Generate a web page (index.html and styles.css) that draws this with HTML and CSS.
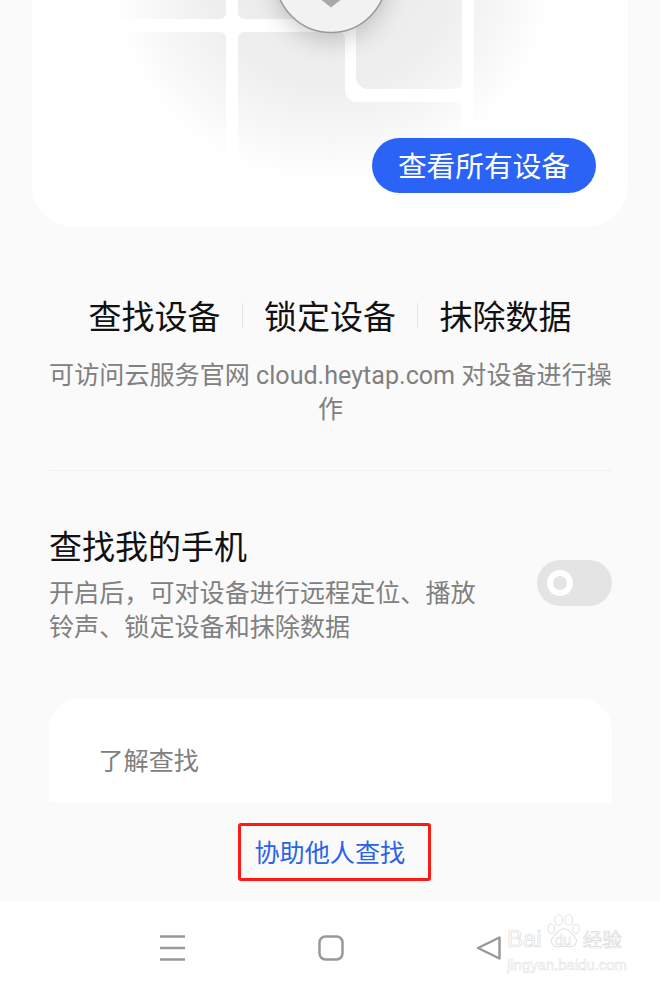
FILE: index.html
```html
<!DOCTYPE html>
<html lang="zh-CN">
<head>
    <meta charset="UTF-8">
    <meta name="viewport" content="width=device-width, initial-scale=1.0">
    <title>查找我的手机</title>
    <link rel="stylesheet" href="styles.css">
</head>
<body>
    <div class="page">
        <div class="map-card">
            <svg class="map" width="596" height="227" viewBox="32 0 596 227">
                <defs>
                    <radialGradient id="fade" gradientUnits="userSpaceOnUse" cx="331" cy="-40" r="225">
                        <stop offset="0" stop-color="#fff"></stop>
                        <stop offset="0.55" stop-color="#fff" stop-opacity="0.85"></stop>
                        <stop offset="0.8" stop-color="#fff" stop-opacity="0.4"></stop>
                        <stop offset="1" stop-color="#fff" stop-opacity="0"></stop>
                    </radialGradient>
                    <mask id="fadeMask">
                        <rect x="32" y="0" width="596" height="227" fill="url(#fade)"></rect>
                    </mask>
                    <filter id="pinShadow" x="-40%" y="-40%" width="180%" height="180%">
                        <feGaussianBlur stdDeviation="12"></feGaussianBlur>
                    </filter>
                </defs>
                <g mask="url(#fadeMask)" fill="#ebebeb">
                    <rect x="120" y="-20" width="106" height="39" rx="6"></rect>
                    <rect x="238" y="-20" width="106" height="39" rx="6"></rect>
                    <rect x="120" y="32" width="106" height="160" rx="6"></rect>
                    <path d="M244 32H339a6 6 0 0 1 6 6V90a12 12 0 0 0 12 12H455a6 6 0 0 1 6 6V200H238V38a6 6 0 0 1 6-6Z"></path>
                    <path d="M356 -20H462V83a6 6 0 0 1-6 6H368a12 12 0 0 1-12-12Z"></path>
                    <rect x="474" y="-20" width="70" height="220" rx="6"></rect>
                </g>
                <circle cx="331" cy="-16" r="56" fill="#000" opacity="0.2" filter="url(#pinShadow)"></circle>
                <circle cx="331" cy="-23" r="55.5" fill="#f2f2f2" stroke="#999" stroke-width="1.5"></circle>
                <path d="M321.5 0H340.5L331 7.5Z" fill="#a8a8a8"></path>
            </svg>
            <a class="all-devices">查看所有设备</a>
        </div>

        <div class="actions">
            <span>查找设备</span>
            <i class="sep"></i>
            <span>锁定设备</span>
            <i class="sep"></i>
            <span>抹除数据</span>
        </div>
        <p class="note">可访问云服务官网 cloud.heytap.com 对设备进行操作</p>

        <div class="find-row">
            <div class="find-text">
                <h2>查找我的手机</h2>
                <p>开启后，可对设备进行远程定位、播放铃声、锁定设备和抹除数据</p>
            </div>
            <div class="toggle"><i class="knob"></i></div>
        </div>

        <div class="learn-card">了解查找</div>

        <div class="help-bar">
            <a class="help-link">协助他人查找</a>
        </div>

        <div class="nav-bar">
            <svg class="nav-icon nav-menu" width="26" height="26" viewBox="0 0 26 26">
                <path d="M0 1.5H25M0 13H25M0 24.5H25" fill="none" stroke="#999" stroke-width="2.5"></path>
            </svg>
            <svg class="nav-icon nav-home" width="26" height="26" viewBox="0 0 26 26">
                <rect x="1.5" y="1.5" width="23" height="23" rx="6" fill="none" stroke="#999" stroke-width="2.5"></rect>
            </svg>
            <svg class="nav-icon nav-back" width="26" height="26" viewBox="0 0 26 26">
                <path d="M23.5 2.5V23.5L2 13Z" fill="none" stroke="#999" stroke-width="2.5" stroke-linejoin="round"></path>
            </svg>
            <div class="watermark">
                <div class="wm-top">
                    <span class="wm-bai">Bai</span>
                    <span class="wm-paw">
                        <svg width="34" height="36" viewBox="0 0 50 54" fill="#fff" stroke="#e2e2e2" stroke-width="1.6">
                            <ellipse cx="17" cy="9" rx="6" ry="8"></ellipse>
                            <ellipse cx="32" cy="9" rx="6" ry="8"></ellipse>
                            <ellipse cx="6" cy="22" rx="5" ry="7"></ellipse>
                            <ellipse cx="43" cy="22" rx="5" ry="7"></ellipse>
                            <path d="M25 22C33 22 35 29 41 34C47 40 42 50 33 49C28 48 22 48 17 49C7 50 3 40 9 34C15 29 17 22 25 22Z"></path>
                        </svg>
                        <span class="wm-du">du</span>
                    </span>
                    <span class="wm-cn">经验</span>
                </div>
                <div class="wm-url">jingyan.baidu.com</div>
            </div>
        </div>
    </div>
</body>
</html>
```

FILE: styles.css
```css
* {
    box-sizing: border-box;
}
html, body {
    margin: 0;
    padding: 0;
}
body {
    width: 660px;
    height: 985px;
    overflow: hidden;
    background-color: #fafafa;
    font-family: Roboto, "Noto Sans CJK SC", sans-serif;
}
.page {
    display: flex;
    flex-direction: column;
    height: 985px;
}
p, h2 {
    margin: 0;
    font-weight: normal;
}

.map-card {
    position: relative;
    width: 596px;
    height: 227px;
    margin: 0 32px;
    background-color: #fff;
    border-radius: 0 0 42px 42px;
    overflow: hidden;
    flex: none;
}
.map {
    display: block;
}
.all-devices {
    position: absolute;
    left: 340px;
    top: 138px;
    width: 224px;
    height: 55px;
    line-height: 59px;
    text-align: center;
    font-size: 28.7px;
    color: #fff;
    background-color: #2a63f6;
    border-radius: 28px;
}

.actions {
    display: flex;
    justify-content: center;
    align-items: center;
    gap: 21.25px;
    height: 44px;
    margin-top: 66px;
    font-size: 33px;
    color: #111;
}
.sep {
    width: 1px;
    height: 25px;
    background-color: #e6e6e6;
}
.note {
    margin: 22px 48px 0 49px;
    height: 112px;
    font-size: 25.1px;
    line-height: 34px;
    text-align: center;
    color: #808080;
    border-bottom: 1px solid #f0f0f0;
}

.find-row {
    display: flex;
    align-items: center;
    justify-content: space-between;
    margin: 54px 48px 0 49px;
}
.find-text {
    width: 440px;
}
.find-text h2 {
    margin-bottom: 6px;
    font-size: 33px;
    line-height: 46px;
    color: #111;
}
.find-text p {
    font-size: 25.1px;
    line-height: 34px;
    color: #808080;
}
.toggle {
    display: flex;
    align-items: center;
    width: 75px;
    height: 46px;
    margin-bottom: 4px;
    padding-left: 10px;
    background-color: #e4e4e4;
    border-radius: 23px;
    flex: none;
}
.knob {
    width: 26px;
    height: 26px;
    border: 6px solid #fff;
    border-radius: 50%;
}

.learn-card {
    height: 104px;
    margin: 53px 48px 0 49px;
    padding: 47px 49.5px 0;
    font-size: 25.1px;
    line-height: 34px;
    color: #808080;
    background-color: #fff;
    border-radius: 32px 32px 0 0;
    flex: none;
}

.help-bar {
    display: flex;
    justify-content: center;
    align-items: center;
    height: 100px;
    padding-left: 9px;
    flex: none;
}
.help-link {
    width: 193px;
    height: 58px;
    padding-left: 13.5px;
    line-height: 56px;
    font-size: 25.1px;
    color: #2a63e8;
    border: 3px solid #fc1a12;
    border-radius: 3px;
}

.nav-bar {
    position: relative;
    flex: 1;
    background-color: #fff;
}
.nav-icon {
    position: absolute;
    top: 33px;
}
.nav-menu {
    left: 160px;
}
.nav-home {
    left: 318px;
}
.nav-back {
    left: 476px;
}
.watermark {
    position: absolute;
    left: 507px;
    top: 12px;
    width: 125px;
    color: #fff;
    -webkit-text-stroke: 0.7px #dcdcdc;
}
.wm-top {
    display: flex;
    align-items: flex-end;
    height: 38px;
    font-family: "Liberation Sans", sans-serif;
}
.wm-bai {
    font-size: 24px;
    line-height: 26px;
}
.wm-paw {
    position: relative;
    width: 36px;
    height: 38px;
    margin-left: 5px;
}
.wm-paw svg {
    position: absolute;
    left: 0;
    top: 0;
}
.wm-du {
    position: absolute;
    left: 8px;
    top: 17px;
    font-size: 15px;
    line-height: 18px;
    -webkit-text-stroke: 0.5px #dcdcdc;
}
.wm-cn {
    font-family: "Noto Sans CJK SC", sans-serif;
    font-size: 19.5px;
    line-height: 26px;
}
.wm-url {
    margin-top: 4px;
    font-family: "Liberation Sans", sans-serif;
    font-size: 14.9px;
    line-height: 18px;
    -webkit-text-stroke: 0.5px #e0e0e0;
    white-space: nowrap;
}
```
